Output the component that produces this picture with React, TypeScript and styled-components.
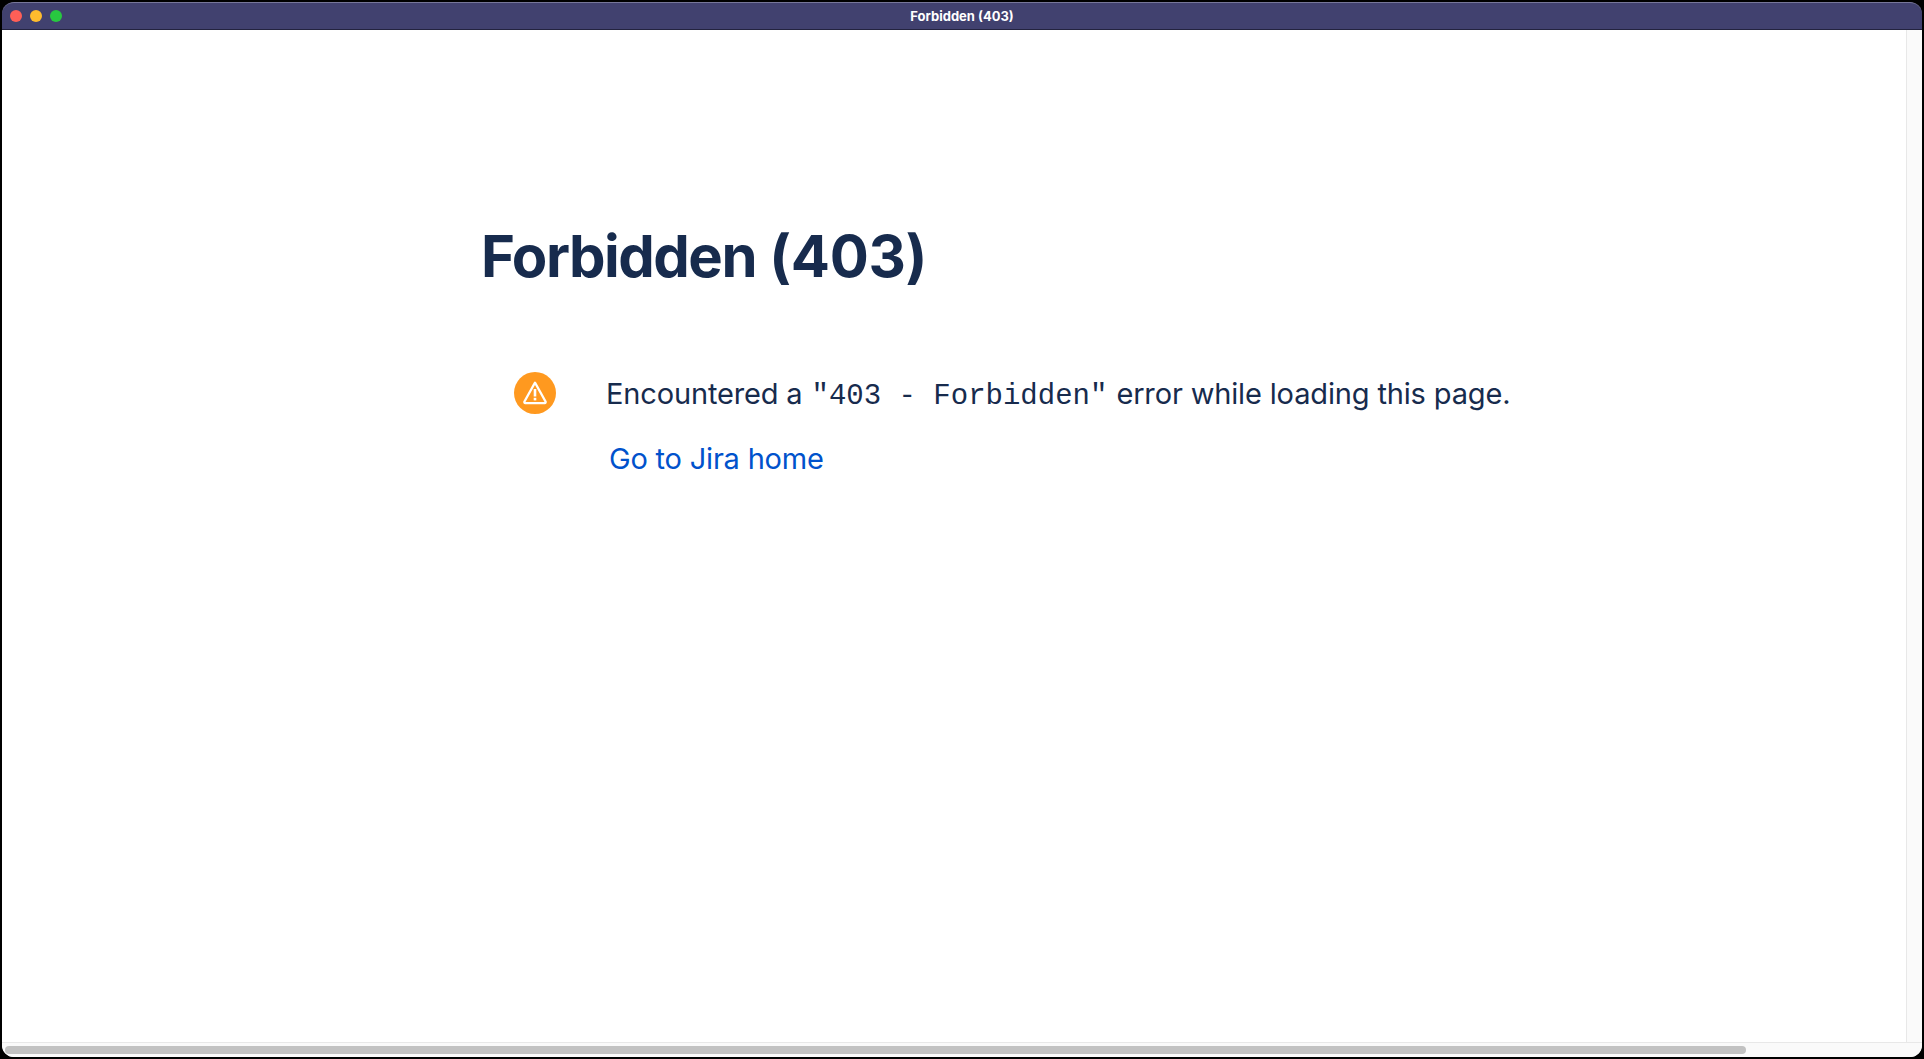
import React from 'react'
import styled, { createGlobalStyle } from 'styled-components'

const GlobalStyle = createGlobalStyle`
html, body {
  margin: 0;
  height: 100%;
  background: #000;
  overflow: hidden;
}
#root {
  height: 100%;
}
`

// window frame
const Window = styled.div`
height: 1059px;
box-sizing: border-box;
padding: 2px 2px 2px;
display: flex;
flex-direction: column;
background: #000;
font-family: Inter, "Liberation Sans", sans-serif;
`
const TitleBar = styled.div`
position: relative;
flex: none;
height: 28px;
box-sizing: border-box;
display: flex;
align-items: center;
justify-content: center;
background: #41416f;
border-top: 1px solid #77779a;
border-bottom: 1px solid #23233f;
border-radius: 12px 12px 0 0;
color: #fff;
font-size: 13px;
font-weight: 700;
`
const Lights = styled.div`
position: absolute;
left: 8px;
top: 6.5px;
display: flex;
gap: 8px;
`
const Light = styled.span<{ $color: string }>`
width: 12px;
height: 12px;
border-radius: 50%;
background: ${({ $color }) => $color};
`

// page area
const Body = styled.div`
flex: 1;
min-height: 0;
display: flex;
flex-direction: column;
background: #fff;
border-radius: 0 0 12px 12px;
overflow: hidden;
`
const Viewport = styled.div`
flex: 1;
min-height: 0;
display: flex;
`
const Content = styled.main`
flex: 1;
padding: 192px 0 0 479px;
color: #172b4d;
`
const VGutter = styled.div`
flex: none;
width: 15px;
background: #fafafa;
border-left: 1px solid #e8e8e8;
`
const HGutter = styled.div`
flex: none;
height: 15px;
box-sizing: border-box;
padding: 3px 176px 3px 3px;
background: #fafafa;
border-top: 1px solid #e8e8e8;
`
const Thumb = styled.div`
height: 8px;
border-radius: 4px;
background: #c2c2c2;
`

// error message
const Heading = styled.h1`
margin: 0;
font-size: 58px;
line-height: 68px;
font-weight: 700;
letter-spacing: -1.5px;
word-spacing: 1px;
color: #172b4d;
`
const Status = styled.span`
letter-spacing: -0.35px;
`
const Message = styled.div`
margin: 82px 0 0 33px;
display: grid;
grid-template-columns: 42px auto;
column-gap: 50px;
row-gap: 29px;
justify-content: start;
align-items: center;
`
const IconCircle = styled.div`
width: 42px;
height: 42px;
border-radius: 50%;
background: #ff991f;
display: flex;
align-items: center;
justify-content: center;
`
const Text = styled.p`
margin: 0;
padding-top: 4px;
font-size: 29px;
line-height: 35px;
color: #172b4d;
letter-spacing: -0.15px;
white-space: nowrap;
`
const Code = styled.code`
font-family: "Liberation Mono", monospace;
font-size: 29px;
letter-spacing: 0;
margin: 0 1px;
`
const HomeLink = styled.a`
grid-column: 2;
margin-left: 3px;
margin-top: -2px;
font-size: 29px;
line-height: 35px;
letter-spacing: -0.2px;
color: #0052cc;
text-decoration: none;
`

const App = () => {
  return (
    <>
      <GlobalStyle />
      <Window>
        <TitleBar>
          <Lights>
            <Light $color="#ff5f57" />
            <Light $color="#febc2e" />
            <Light $color="#28c840" />
          </Lights>
          Forbidden (403)
        </TitleBar>
        <Body>
          <Viewport>
            <Content>
              <Heading>Forbidden <Status>(403)</Status></Heading>
              <Message>
                <IconCircle>
                  <svg width="26" height="26" viewBox="0 0 26 26" fill="none">
                    <path
                      d="M13 2.6 L23.6 21.6 a1 1 0 0 1 -0.9 1.5 H3.3 a1 1 0 0 1 -0.9 -1.5 Z"
                      stroke="#fff"
                      strokeWidth="2.2"
                      strokeLinejoin="round"
                    />
                    <rect x="11.7" y="9" width="2.6" height="7.5" fill="#fff" />
                    <rect x="11.7" y="17.8" width="2.6" height="2.6" fill="#fff" />
                  </svg>
                </IconCircle>
                <Text>
                  Encountered a <Code>"403 - Forbidden"</Code> error while loading this page.
                </Text>
                <HomeLink href="#">Go to Jira home</HomeLink>
              </Message>
            </Content>
            <VGutter />
          </Viewport>
          <HGutter>
            <Thumb />
          </HGutter>
        </Body>
      </Window>
    </>
  )
}

export default App
